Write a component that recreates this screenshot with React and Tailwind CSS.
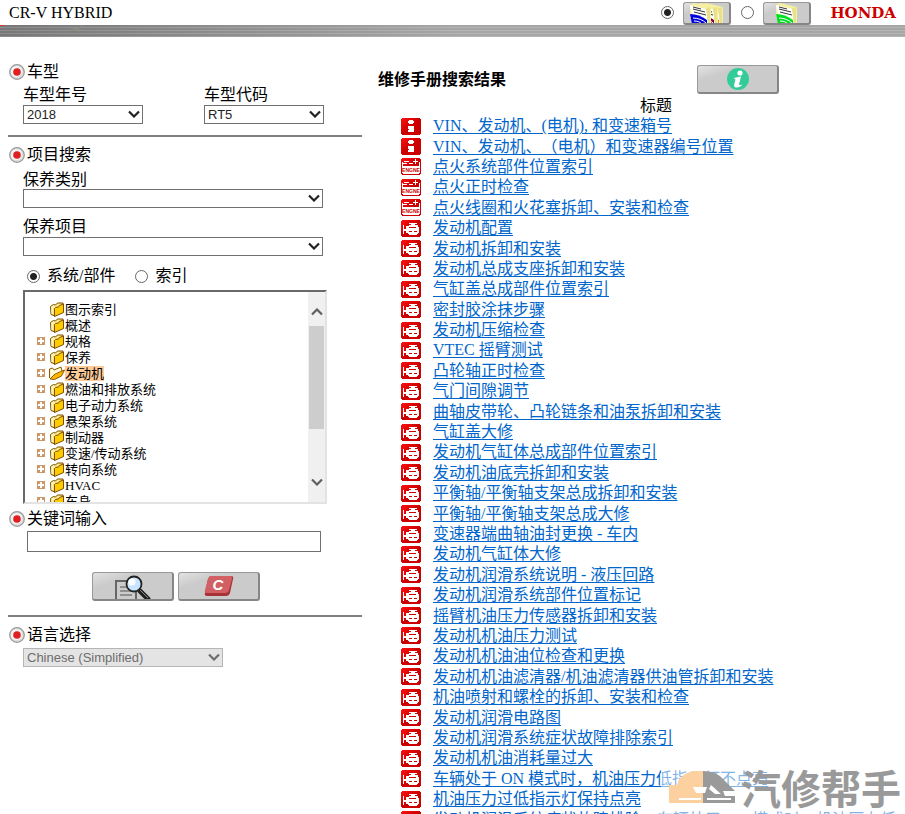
import React from "react";

const SERIF = "font-['Liberation_Serif','Noto_Sans_CJK_SC',serif]";

const tree = [
  { name: "图示索引" },
  { name: "概述" },
  { name: "规格", more: true },
  { name: "保养", more: true },
  { name: "发动机", more: true, open: true },
  { name: "燃油和排放系统", more: true },
  { name: "电子动力系统", more: true },
  { name: "悬架系统", more: true },
  { name: "制动器", more: true },
  { name: "变速/传动系统", more: true },
  { name: "转向系统", more: true },
  { name: "HVAC", more: true },
  { name: "车身", more: true },
];

const results = [
  ["info", "VIN、发动机、(电机), 和变速箱号"],
  ["info", "VIN、发动机、（电机）和变速器编号位置"],
  ["battery", "点火系统部件位置索引"],
  ["battery", "点火正时检查"],
  ["battery", "点火线圈和火花塞拆卸、安装和检查"],
  ["engine", "发动机配置"],
  ["engine", "发动机拆卸和安装"],
  ["engine", "发动机总成支座拆卸和安装"],
  ["engine", "气缸盖总成部件位置索引"],
  ["engine", "密封胶涂抹步骤"],
  ["engine", "发动机压缩检查"],
  ["engine", "VTEC 摇臂测试"],
  ["engine", "凸轮轴正时检查"],
  ["engine", "气门间隙调节"],
  ["engine", "曲轴皮带轮、凸轮链条和油泵拆卸和安装"],
  ["engine", "气缸盖大修"],
  ["engine", "发动机气缸体总成部件位置索引"],
  ["engine", "发动机油底壳拆卸和安装"],
  ["engine", "平衡轴/平衡轴支架总成拆卸和安装"],
  ["engine", "平衡轴/平衡轴支架总成大修"],
  ["engine", "变速器端曲轴油封更换 - 车内"],
  ["engine", "发动机气缸体大修"],
  ["engine", "发动机润滑系统说明 - 液压回路"],
  ["engine", "发动机润滑系统部件位置标记"],
  ["engine", "摇臂机油压力传感器拆卸和安装"],
  ["engine", "发动机机油压力测试"],
  ["engine", "发动机机油油位检查和更换"],
  ["engine", "发动机机油滤清器/机油滤清器供油管拆卸和安装"],
  ["engine", "机油喷射和螺栓的拆卸、安装和检查"],
  ["engine", "发动机润滑电路图"],
  ["engine", "发动机润滑系统症状故障排除索引"],
  ["engine", "发动机机油消耗量过大"],
  ["engine", "车辆处于 ON 模式时，机油压力低指示灯不点亮"],
  ["engine", "机油压力过低指示灯保持点亮"],
  ["engine", "发动机润滑系统症状故障排除：车辆处于 ON 模式时，机油压力低"],
];

function ResultIcon({ kind }) {
  return (
    <svg className="block" width="20" height="17" viewBox="0 0 20 17" shapeRendering="crispEdges" aria-hidden="true">
      <defs>
        <linearGradient id="redTile" x1="0" y1="0" x2="1" y2="1">
          <stop offset="0" stopColor="#ff1010" />
          <stop offset="0.5" stopColor="#cc0000" />
          <stop offset="1" stopColor="#cc0000" />
        </linearGradient>
      </defs>
      <path d="M1 0h18v1h1v15h-1v1H1v-1H0V1h1z" fill="url(#redTile)" />
      {kind === "info" && <path fill="#fff" d="M8 2h4v1h1v2h-1v1H8V5H7V3h1zM7 8h6v6H7v-2h1v-1H7z" />}
      {kind === "battery" && (
        <g>
          <path fill="#fff" d="M3 3h5v1H3zM12 3h5v1h-5zM14 1h1v5h-1zM1 4h1v11H1zM18 4h1v11h-1zM2 15h16v1H2zM8 5h4v1H8zM2 5h4v1H2zM2 8h16v7H2z" />
          <text x="10" y="14" textAnchor="middle" fontFamily="Liberation Sans" fontWeight="700" fontSize="5" fill="#cc0000">
            ENGNE
          </text>
        </g>
      )}
      {kind === "engine" && (
        <path
          fill="#fff"
          fillRule="evenodd"
          d="M2 5h1v4h2V6h3V5h2V4H8V3h8v1h-2v1h3v2h1v6h-1v1h-1v1H8v-1H7v-1H5v-2H3v3H2zM8 7v1h7V7zM8 11v1h3v-1zM13 11v1h3v-1z"
        />
      )}
    </svg>
  );
}

function Folder({ open }) {
  return open ? (
    <svg className="shrink-0" width="16" height="16" viewBox="0 0 16 16" aria-hidden="true">
      <path d="M.500 13V4l3-1L5 5l7-3 1 4" fill="#fff3c0" stroke="#8a5a00" />
      <path d="M1 14l5-5 9.500-4-3 6-7 3.500z" fill="#ffb400" stroke="#8a5a00" />
      <path d="M2 5l2-.500L5 6l6-2.500 1 2L5 9l-4 3z" fill="#fff8dc" />
    </svg>
  ) : (
    <svg className="shrink-0" width="16" height="16" viewBox="0 0 16 16" aria-hidden="true">
      <path d="M1.500 5.500l3-2 2 .500 2-2h5.500v2l-8 11-4-1.500z" fill="#ffe88a" stroke="#7a4e00" />
      <path d="M5.500 7.500l1-1 3-.500 1-1.500 4-1.500v8.500l-9 4z" fill="#ffcc00" stroke="#7a4e00" />
      <path d="M2.500 6h3M3 6v7" stroke="#fff8dc" />
    </svg>
  );
}

function Chevron({ up, className = "" }) {
  return (
    <svg className={className} width="12" height="8" viewBox="0 0 12 8" aria-hidden="true">
      <path d={up ? "M1 6.500l5-5 5 5" : "M1 1.500l5 5 5-5"} fill="none" stroke="currentColor" strokeWidth="2.200" />
    </svg>
  );
}

function Select({ id, value, width, disabled }) {
  return (
    <div className={`relative ${width}`}>
      <select
        id={id}
        disabled={disabled}
        defaultValue={value}
        className={`block h-[19px] w-full appearance-none rounded-none border pl-[3px] font-['Liberation_Sans',sans-serif] text-[13px] leading-[17px] ${
          disabled ? "border-[#b5b5b5] bg-[#e4e4e4] text-[#6d6d6d] opacity-100" : "border-[#707070] bg-white text-[#222]"
        }`}
      >
        <option value={value}>{value}</option>
      </select>
      <Chevron
        className={`pointer-events-none absolute top-[5px] right-[3px] ${disabled ? "text-[#6d6d6d]" : "text-[#222]"}`}
      />
    </div>
  );
}

function Heading({ children, htmlFor }) {
  const Tag = htmlFor ? "label" : "h2";
  return (
    <Tag htmlFor={htmlFor} className="flex h-5 items-center gap-[2px] pl-[1px] leading-5">
      <svg width="16" height="16" viewBox="0 0 16 16" aria-hidden="true">
        <circle cx="8" cy="8" r="7.300" fill="#dcdcdc" stroke="#999" strokeWidth="1.200" />
        <circle cx="7.500" cy="7.500" r="5.500" fill="#f4f4f4" />
        <circle cx="8" cy="8" r="3.800" fill="#e02020" />
      </svg>
      {children}
    </Tag>
  );
}

function Radio({ id, name, label, checked }) {
  return (
    <input
      id={id}
      type="radio"
      name={name}
      aria-label={label}
      defaultChecked={checked}
      className="size-[13px] shrink-0 appearance-none rounded-full border border-[#666] bg-white checked:bg-[radial-gradient(circle,#222_3px,#fff_4px)]"
    />
  );
}

const GREY_BUTTON =
  "flex items-center justify-center overflow-hidden rounded-[3px] border border-t-[#999] border-l-[#999] border-r-2 border-b-2 border-[#868686] bg-linear-to-br from-[#e2e2e2] via-[#cbcbcb] via-30% to-[#cbcbcb]";

function Book({ x, color }) {
  return (
    <g transform={`translate(${x} 0)`}>
      <path d="M0 2l4-2 17 4v17H5L0 14z" fill="#f5f0a0" />
      <path d="M0 2l16 4 2 15H4z" fill="#fff" />
      <path d="M0 11c6 0 12 2 17 6v4H2z" fill={color} />
      <path d="M3 4l8 2M3 6l12 3M4 9l12 3" stroke="#333" fill="none" />
      <path d="M3 15c5 0 10 2 13 5M4 18c4 0 6 1 8 3" stroke="#fff" fill="none" />
      <path d="M16 5l4-1v17h-2z" fill="#e9e18a" />
    </g>
  );
}

function PageHeader() {
  return (
    <header>
      <div className="flex h-[25px] items-center justify-between pr-[9px] pl-[9px]">
        <h1 className="text-[16px] leading-5">CR-V HYBRID</h1>
        <div className="flex h-full items-center">
          <Radio name="manual" label="全部手册" checked />
          <button type="button" aria-label="全部手册" className={`${GREY_BUTTON} mt-[2px] ml-[9px] h-[23px] w-12`}>
            <svg width="36" height="21" viewBox="0 0 36 21" aria-hidden="true">
              <Book x={13} color="#ff8c1a" />
              <Book x={8} color="#800040" />
              <Book x={1} color="#0000dd" />
            </svg>
          </button>
          <span className="ml-[10px] flex">
            <Radio name="manual" label="单本手册" />
          </span>
          <button type="button" aria-label="单本手册" className={`${GREY_BUTTON} mt-[2px] ml-[9px] h-[23px] w-12`}>
            <svg width="24" height="21" viewBox="0 0 24 21" aria-hidden="true">
              <Book x={1} color="#00e020" />
            </svg>
          </button>
          <span className="ml-[19px] font-['DejaVu_Serif',serif] text-[15px] leading-5 font-bold text-[#cc0000]">HONDA</span>
        </div>
      </div>
      <div className="flex h-3 bg-[#a6a6a6]">
        <div className="w-1/2 bg-linear-to-r from-[#777] to-[#a6a6a6]">
          <div className="h-full bg-[repeating-linear-gradient(#ffffff00_0px,#ffffff00_2px,#ffffff28_2px,#ffffff28_3px)]">
            <svg className="block" width="90" height="6" viewBox="0 0 90 6" aria-hidden="true">
              <path d="M0 0h5l-2 1H0z" fill="#e03c28" />
              <path d="M71 5c5 0 9-2 12-5" fill="none" stroke="#8d8a80" strokeWidth="2" />
            </svg>
          </div>
        </div>
        <div className="flex-1 bg-[repeating-linear-gradient(#ffffff00_0px,#ffffff00_2px,#ffffff28_2px,#ffffff28_3px)]" />
      </div>
    </header>
  );
}

function TreeBox() {
  return (
    <div className="ml-[15px] flex h-[214px] w-[304px] border-2 border-t-[#696969] border-r-[#e3e3e3] border-b-[#e3e3e3] border-l-[#696969]">
      <ul className="flex-1 overflow-hidden pt-[9px] pl-3 text-[13px]">
        {tree.map((item) => (
          <li key={item.name} className="flex h-4 items-center">
            <span className="flex w-3 shrink-0">
              {item.more && (
                <svg width="8" height="8" viewBox="0 0 8 8" aria-hidden="true">
                  <path d="M0 0h8v8H0z" fill="#cc9966" />
                  <path d="M4 1v6M1 4h6" stroke="#fff" strokeWidth="2" />
                </svg>
              )}
            </span>
            <Folder open={item.open} />
            <a href="#tree" className={`h-[15px] leading-[15px] whitespace-nowrap ${item.open ? "bg-[#ffcc99]" : ""}`}>
              {item.name}
            </a>
          </li>
        ))}
      </ul>
      <div className="flex w-[17px] flex-col items-center bg-[#f0f0f0] pt-4 pb-4 text-[#606060]">
        <Chevron up />
        <div className="mt-[10px] h-[103px] w-[15px] bg-[#cdcdcd]" />
        <Chevron className="mt-auto" />
      </div>
    </div>
  );
}

function SearchPanel() {
  return (
    <form className="w-[354px] shrink-0 pt-[25px]">
      <Heading>车型</Heading>
      <div className="flex gap-[61px] pl-[15px]">
        <div>
          <label htmlFor="year" className="block h-[23px] leading-[26px]">车型年号</label>
          <Select id="year" value="2018" width="w-[120px]" />
        </div>
        <div>
          <label htmlFor="code" className="block h-[23px] leading-[26px]">车型代码</label>
          <Select id="code" value="RT5" width="w-[120px]" />
        </div>
      </div>
      <hr className="mt-[11px] mb-2 border-t-2 border-[#808080]" />
      <Heading>项目搜索</Heading>
      <div className="pl-[15px]">
        <label htmlFor="kind" className="block h-6 pt-[2px] leading-[26px]">保养类别</label>
        <Select id="kind" value="" width="w-[300px]" />
        <label htmlFor="item" className="mt-[5px] block h-6 pt-[1px] leading-[26px]">保养项目</label>
        <Select id="item" value="" width="w-[300px]" />
      </div>
      <div className="flex h-[34px] items-center pt-[6px] pl-[19px]">
        <Radio id="system" name="mode" label="系统/部件" checked />
        <label htmlFor="system" className="ml-[7px]">系统/部件</label>
        <span className="ml-5 flex">
          <Radio id="index" name="mode" label="索引" />
        </span>
        <label htmlFor="index" className="ml-[7px]">索引</label>
      </div>
      <TreeBox />
      <div className="pt-[5px]">
        <Heading htmlFor="keyword">关键词输入</Heading>
      </div>
      <input id="keyword" type="text" className="mt-[2px] ml-[19px] block h-[21px] w-[294px] border border-[#707070] bg-white px-1 text-[13px]" />
      <div className="mt-5 flex gap-1 pl-[84px]">
        <button type="submit" aria-label="搜索" className={`${GREY_BUTTON} h-[29px] w-[82px]`}>
          <svg width="40" height="26" viewBox="0 0 40 26" aria-hidden="true">
            <path d="M3 26V8h20v18" fill="none" stroke="#666" strokeWidth="2" />
            <path d="M7 14h8M7 18h12M7 22h12" stroke="#555" />
            <path d="M26 17l10 10" stroke="#222" strokeWidth="5" />
            <path d="M27 17l8 8" stroke="#888" />
            <circle cx="21" cy="11" r="7.500" fill="#c8e4ff" stroke="#222" strokeWidth="1.800" />
            <circle cx="19" cy="9" r="3.500" fill="#fff" />
          </svg>
        </button>
        <button type="reset" aria-label="清除" className={`${GREY_BUTTON} h-[29px] w-[82px]`}>
          <svg width="30" height="22" viewBox="0 0 30 22" aria-hidden="true">
            <path d="M7 1h20q3 0 2 3l-3 14q-1 3-4 3H3q-3 0-2-3L4 4q1-3 3-3z" fill="#a83238" />
            <path d="M7 1h19q3 0 2 3l-3 11q-1 3-4 3H3q-3 0-2-3L4 4q1-3 3-3z" fill="#d06064" />
            <text x="14" y="15" textAnchor="middle" fontFamily="Liberation Sans" fontStyle="italic" fontWeight="700" fontSize="15" fill="#fff">
              C
            </text>
          </svg>
        </button>
      </div>
      <hr className="mt-[14px] mb-2 border-t-2 border-[#808080]" />
      <Heading htmlFor="language">语言选择</Heading>
      <div className="mt-[3px] pl-[15px]">
        <Select id="language" value="Chinese (Simplified)" width="w-[200px]" disabled />
      </div>
    </form>
  );
}

function Results() {
  return (
    <main className="min-w-0 flex-1 pt-7">
      <div className="flex items-center">
        <h2 className="w-[319px] leading-6 font-bold">维修手册搜索结果</h2>
        <button type="button" aria-label="信息" className={`${GREY_BUTTON} h-[29px] w-[82px]`}>
          <svg width="22" height="22" viewBox="0 0 22 22" aria-hidden="true">
            <circle cx="11" cy="11" r="11" fill="#33cc99" />
            <circle cx="13" cy="5" r="2.600" fill="#fff" />
            <path d="M7 10q3-1 7-1.500l-2 8q0 1.500 2.500 0l.300 1q-3 2.500-5.800 2-2.500-.500-1.800-3l1.200-5q0-1-1.400-.700z" fill="#fff" />
          </svg>
        </button>
      </div>
      <table className="mt-[1px] ml-[23px] h-[735px] w-[490px] border-collapse">
        <thead>
          <tr>
            <th className="w-5 p-0" />
            <th className="p-0 leading-[21px] font-normal">标题</th>
          </tr>
        </thead>
        <tbody>
          {results.map(([kind, title]) => (
            <tr key={title}>
              <td className="p-0 align-middle">
                <ResultIcon kind={kind} />
              </td>
              <td className="max-w-0 py-0 pr-0 pl-3 leading-5 whitespace-nowrap">
                <a href="#result" className="text-[#0066cc] underline underline-offset-2">
                  {title}
                </a>
              </td>
            </tr>
          ))}
        </tbody>
      </table>
    </main>
  );
}

function Watermark() {
  return (
    <div className="pointer-events-none absolute right-0 bottom-0 flex h-[52px] items-center gap-1 bg-white/50 pr-1 pb-[2px] pl-2">
      <svg width="68" height="34" viewBox="0 0 68 34" aria-hidden="true">
        <path d="M0 33V15h8Q11 3 25 1h9v32z" fill="#fdd0a0" />
        <path d="M34 1q14 0 21 9l11 11H54l2 5h10v7H34z" fill="#9a9a9a" />
        <path d="M24 17h14l-2 6h-9zM42 15l10 9h-6l-6-5zM10 28h22v2H10zM38 28h24v2H38z" fill="#fff" />
      </svg>
      <span className="font-['Noto_Sans_CJK_SC',sans-serif] text-[40px] leading-[40px] font-bold text-[#999]">汽修帮手</span>
    </div>
  );
}

export default function App() {
  return (
    <div className={`relative h-screen overflow-hidden bg-white text-[16px] text-black [text-spacing-trim:space-all] ${SERIF}`}>
      <PageHeader />
      <div className="flex gap-4 pl-2">
        <SearchPanel />
        <Results />
      </div>
      <Watermark />
    </div>
  );
}
